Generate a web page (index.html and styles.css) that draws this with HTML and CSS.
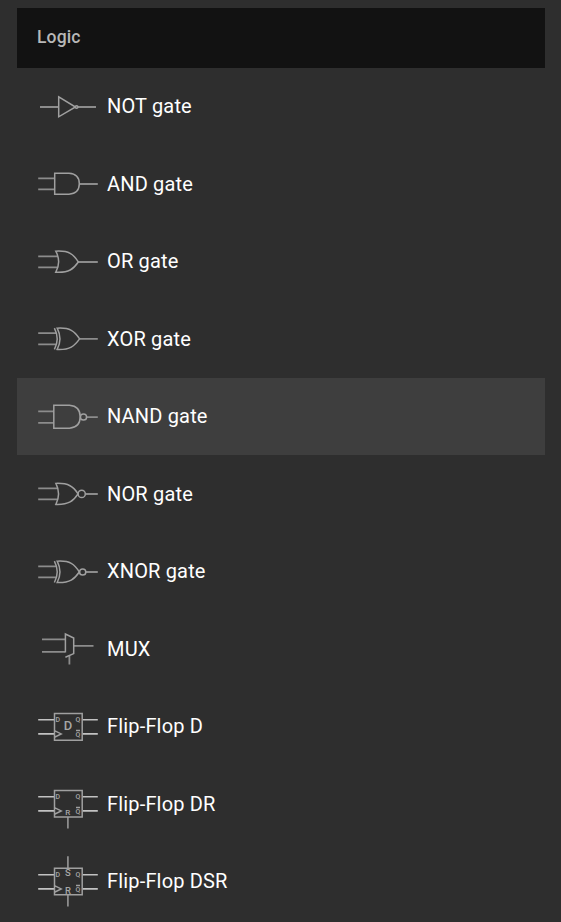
FILE: index.html
```html
<!DOCTYPE html>
<html lang="en">
<head>
<meta charset="utf-8">
<title>Logic</title>
<link rel="stylesheet" href="styles.css">
</head>
<body>
<section class="panel">
  <h2 class="panel-header">Logic</h2>
  <ul class="list">
    <li class="item"><svg class="icon" viewBox="0 0 60 60"><path class="wire" d="M2 30H20.7M40 30H58"/><path d="M20.7 19.8V39.8L37.5 30Z"/><circle cx="38.6" cy="30" r="1.3"/></svg><span class="label">NOT gate</span></li>
    <li class="item"><svg class="icon" viewBox="0 0 60 60"><path class="wire" d="M.2 24.4H16.7M.2 35.4H16.7M41.3 30H59.8"/><path d="M16.7 19.3H31Q41.3 20 41.3 29.8T31 40.2H16.7Z"/></svg><span class="label">AND gate</span></li>
    <li class="item"><svg class="icon" viewBox="0 0 60 60"><path class="wire" d="M.2 24.4H20M.2 35.4H20M40 30H59.8"/><path d="M17.8 19.2C31 18.5 35.5 22 40.3 30C35.5 37 31 41 17.8 40.2Q23.5 30 17.8 19.2Z"/></svg><span class="label">OR gate</span></li>
    <li class="item"><svg class="icon" viewBox="0 0 60 60"><path class="wire" d="M.2 24.2H18M.2 35.4H18M41.5 29.9H59.8"/><path d="M16.4 19.2Q22 30 16.4 40.4M19.2 19.2C32 18.5 36.5 22 41.6 29.9C36.5 37 32 41 19.2 40.4Q24.7 30 19.2 19.2Z"/></svg><span class="label">XOR gate</span></li>
    <li class="item selected"><svg class="icon" viewBox="0 0 60 60"><path class="wire" d="M.2 24.4H15.7M.2 35.9H15.7M48.7 30.1H59.8"/><path d="M15.8 18.3H31.5Q42.2 19.2 42.2 29.8T31.5 41.2H15.8Z"/><circle cx="45.5" cy="30" r="3.1"/></svg><span class="label">NAND gate</span></li>
    <li class="item"><svg class="icon" viewBox="0 0 60 60"><path class="wire" d="M.2 24.4H20M.2 35.4H20M47.5 30H59.8"/><path d="M17.9 19.4C30.5 19 35.5 22.5 40 29.9C35.5 37 31 40.8 17.9 40.4Q23.2 30 17.9 19.4Z"/><circle cx="43.7" cy="29.9" r="3.6"/></svg><span class="label">NOR gate</span></li>
    <li class="item"><svg class="icon" viewBox="0 0 60 60"><path class="wire" d="M.2 24.4H18M.2 35.4H18M47.9 30H59.8"/><path d="M16.4 19.2Q22 30 16.4 40.5M19.2 19.2C32 18.5 36.5 22 41.3 30C36.5 37 32 41 19.2 40.5Q24.7 30 19.2 19.2Z"/><circle cx="44.7" cy="30" r="3.1"/></svg><span class="label">XNOR gate</span></li>
    <li class="item"><svg class="icon" viewBox="0 0 60 60"><path class="wire" d="M4 20.3H27M4 32.8H27M35.7 26.9H55.5M31.4 36.5V45.4"/><path d="M27.4 33.4V15L35.7 19V34.6L27.4 38.2"/></svg><span class="label">MUX</span></li>
    <li class="item"><svg class="icon" viewBox="0 0 60 60"><path class="lead" d="M.2 22.8H16M.2 36.9H16M44.5 22.8H59.8M44.5 36.9H59.8"/><path d="M16.5 16.4H44.2V43.2H16.5ZM17 33.8L23.2 36.9L17 40M38 33.6H42"/><text class="mark" x="19.8" y="25">D</text><text class="mark" x="40" y="25">Q</text><text class="mark" x="40" y="39.9">Q</text><text class="name" x="30.1" y="33.1">D</text></svg><span class="label">Flip-Flop D</span></li>
    <li class="item"><svg class="icon" viewBox="0 0 60 60"><path class="lead" d="M.2 22.8H16M.2 36.9H16M44.5 22.8H59.8M44.5 36.9H59.8"/><path class="wire" d="M29.9 43V54.4"/><path d="M16.5 16.4H44.2V43.1H16.5ZM17 33.8L23.2 36.9L17 40M38 33.6H42"/><text class="mark" x="19.8" y="25">D</text><text class="mark" x="40" y="25">Q</text><text class="mark" x="40" y="39.9">Q</text><text class="reset" x="29.8" y="41.4">R</text></svg><span class="label">Flip-Flop DR</span></li>
    <li class="item"><svg class="icon" viewBox="0 0 60 60"><path class="lead" d="M.2 22.7H16M.2 36.9H16M44.5 22.7H59.8M44.5 36.9H59.8"/><path class="wire" d="M29.9 4.2V18M29.9 43V54.4"/><path d="M16.5 16.2H44.2V42.8H16.5ZM17 33.8L23.2 36.9L17 40M38 33.6H42"/><text class="mark" x="19.8" y="25">D</text><text class="mark" x="40" y="25">Q</text><text class="mark" x="40" y="39.9">Q</text><text class="set" x="29.9" y="24.4">S</text><text class="set" x="29.9" y="41.8">R</text></svg><span class="label">Flip-Flop DSR</span></li>
  </ul>
</section>
</body>
</html>
```

FILE: styles.css
```css
* { box-sizing: border-box; }

body {
  margin: 0;
  height: 922px;
  overflow: hidden;
  background: #2e2e2e;
  color: #fff;
  font-family: Roboto, sans-serif;
}

.panel { padding: 8px 16px 0 17px; }

.panel-header {
  display: flex;
  align-items: center;
  height: 60px;
  margin: 0;
  padding: 0 20px 2px;
  background: #121212;
  color: #b8b8b8;
  font-size: 17.5px;
  font-weight: 500;
  letter-spacing: 0.15px;
}

.list {
  margin: 0;
  padding: 0;
  list-style: none;
}

.item {
  display: flex;
  align-items: center;
  gap: 9px;
  height: 77.49px;
  padding-left: 21px;
  font-size: 20px;
  line-height: 24px;
}

.label {
  padding-bottom: 0.7px;
  letter-spacing: 0.17px;
}

.selected { background: #3e3e3e; }

.icon {
  flex: none;
  width: 60px;
  height: 60px;
  fill: none;
  stroke: #a0a0a0;
  stroke-width: 1.5;
}

.wire { stroke: #8c8c8c; stroke-width: 1.8; }
.lead { stroke: #c2c2c2; stroke-width: 1.6; }

.icon text {
  fill: #a6a6a6;
  stroke: none;
  font-family: Roboto, sans-serif;
  font-weight: 500;
  text-anchor: middle;
}

.icon .mark { font-size: 7px; }
.icon .name { font-size: 13px; }
.icon .reset { font-size: 8px; }
.icon .set { font-size: 9.5px; }
```
